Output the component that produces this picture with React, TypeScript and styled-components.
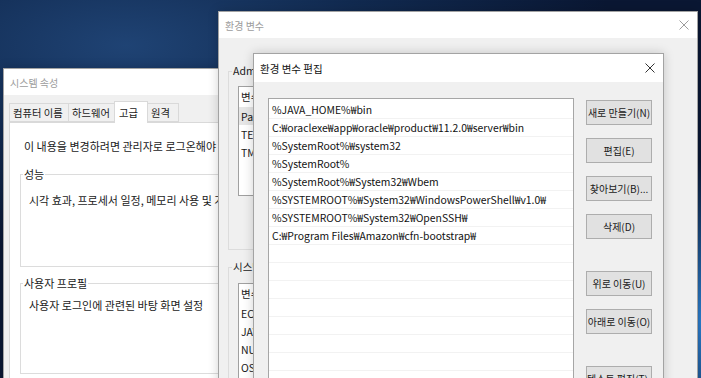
import styled, { createGlobalStyle } from "styled-components";

const GlobalStyle = createGlobalStyle`
  html, body {
    margin: 0;
    padding: 0;
    background: #0a1733;
  }
  * {
    box-sizing: border-box;
  }
`;

const Desktop = styled.div`
  position: relative;
  width: 701px;
  height: 378px;
  overflow: hidden;
  background:
    radial-gradient(ellipse 30px 160px at 100% 85%, #2b7fd0 0%, rgba(20, 70, 140, 0) 100%),
    radial-gradient(ellipse 70% 55% at 18% 12%, #1f4374 0%, #112a50 50%, #0a1733 100%);
  font-family: "Noto Sans CJK KR", "Noto Sans", sans-serif;
  font-size: 10px;
  color: #1a1a1a;
`;

const Window = styled.div<{ $left: number; $top: number; $width: number; $height: number; $z: number }>`
  position: absolute;
  left: ${(p) => p.$left}px;
  top: ${(p) => p.$top}px;
  width: ${(p) => p.$width}px;
  height: ${(p) => p.$height}px;
  z-index: ${(p) => p.$z};
  display: flex;
  flex-direction: column;
  background: #f0f0f0;
  border: 1px solid #a3a3a3;
  box-shadow: 0 0 10px rgba(0, 0, 0, 0.18);
`;

const TitleBar = styled.div<{ $height: number; $active?: boolean }>`
  flex: none;
  height: ${(p) => p.$height}px;
  display: flex;
  align-items: center;
  justify-content: space-between;
  padding: 0 8px 0 6px;
  background: #fff;
  color: ${(p) => (p.$active ? "#111" : "#9c9c9c")};
  font-size: ${(p) => (p.$active ? 10.5 : 10)}px;
`;

const CloseIcon = ({ color }: { color: string }) => (
  <svg width="10" height="10" viewBox="0 0 10 10">
    <path d="M0.5 0.5 L9.5 9.5 M9.5 0.5 L0.5 9.5" stroke={color} strokeWidth="1" fill="none" />
  </svg>
);

/* ---------- 시스템 속성 ---------- */

const SysBody = styled.div`
  flex: 1;
  display: flex;
  flex-direction: column;
  padding: 6px 5px 0 5px;
`;

const TabStrip = styled.div`
  display: flex;
  align-items: flex-end;
  height: 21px;
  position: relative;
  z-index: 1;
`;

const Tab = styled.div<{ $selected?: boolean; $width: number }>`
  width: ${(p) => p.$width}px;
  height: ${(p) => (p.$selected ? 22 : 19)}px;
  margin-bottom: ${(p) => (p.$selected ? -1 : 0)}px;
  padding: 0 0 0 ${(p) => (p.$selected ? 4 : 3)}px;
  display: flex;
  align-items: center;
  background: ${(p) => (p.$selected ? "#fff" : "#f0f0f0")};
  border: 1px solid #d9d9d9;
  border-bottom: ${(p) => (p.$selected ? "none" : "1px solid #d9d9d9")};
  margin-left: -1px;
  font-size: 10.3px;
  white-space: nowrap;
  &:first-child {
    margin-left: 0;
  }
`;

const TabPanel = styled.div`
  flex: 1;
  background: #fff;
  border: 1px solid #d9d9d9;
  padding: 16px 10px;
  display: flex;
  flex-direction: column;
  font-size: 11px;
`;

const Notice = styled.div`
  padding-left: 4px;
  line-height: 14px;
  white-space: nowrap;
`;

const Group = styled.fieldset<{ $height: number; $top: number; $padTop: number; $padLeft: number }>`
  margin: ${(p) => p.$top}px 0 0;
  padding: ${(p) => p.$padTop}px 8px 8px ${(p) => p.$padLeft}px;
  height: ${(p) => p.$height}px;
  border: 1px solid #dcdcdc;
  min-width: 0;
  display: flex;
  flex-direction: column;
`;

const GroupLabel = styled.legend`
  padding: 0 1px;
  margin-left: -6px;
  line-height: 14px;
  white-space: nowrap;
`;

const GroupText = styled.div`
  line-height: 14px;
  white-space: nowrap;
`;

const ButtonRow = styled.div`
  margin-top: auto;
  display: flex;
  justify-content: flex-end;
  gap: 8px;
`;

/* ---------- 환경 변수 ---------- */

const EnvBody = styled.div`
  flex: 1;
  display: flex;
  flex-direction: column;
  padding: 0 44px 0 9px;
  font-size: 10.5px;
`;

const ListView = styled.div<{ $height?: number }>`
  height: ${(p) => (p.$height ? `${p.$height}px` : "auto")};
  flex: ${(p) => (p.$height ? "none" : "1")};
  background: #fff;
  border: 1px solid #a0a0a0;
  overflow: hidden;
`;

const ListHeader = styled.div`
  display: flex;
  height: 20px;
  align-items: center;
  border-bottom: 1px solid #fff;
`;

const HeaderCell = styled.div<{ $width: number }>`
  width: ${(p) => p.$width}px;
  height: 100%;
  display: flex;
  align-items: center;
  padding-left: 2px;
  border-right: 1px solid #e5e5e5;
`;

const ListRow = styled.div<{ $selected?: boolean }>`
  display: flex;
  height: 18px;
  align-items: center;
  background: ${(p) => (p.$selected ? "#e6e6e6" : "transparent")};
`;

const Cell = styled.div<{ $width: number }>`
  width: ${(p) => p.$width}px;
  padding-left: 2px;
  white-space: nowrap;
  overflow: hidden;
`;

const DialogButton = styled.button<{ $width?: number }>`
  width: ${(p) => p.$width ?? 75}px;
  height: 23px;
  padding: 0;
  background: #e1e1e1;
  border: 1px solid #adadad;
  font-family: inherit;
  font-size: 10px;
  color: #1a1a1a;
  white-space: nowrap;
`;

/* ---------- 환경 변수 편집 ---------- */

const EditBody = styled.div`
  flex: 1;
  display: flex;
  gap: 12px;
  padding: 16px 11px 0 14px;
  overflow: hidden;
`;

const PathList = styled.div`
  width: 306px;
  flex: none;
  align-self: stretch;
  background: #fff;
  border: 1px solid #a6a6a6;
  padding-top: 2px;
  overflow: hidden;
`;

const PathRow = styled.div`
  height: 18px;
  display: flex;
  align-items: center;
  padding-left: 3px;
  border-bottom: 1px solid #f2f2f2;
  font-size: 10.4px;
  color: #111;
  white-space: nowrap;
`;

const ButtonColumn = styled.div`
  display: flex;
  flex-direction: column;
  gap: 13px;
  padding-top: 2px;
`;

const SideButton = styled.button`
  width: 66px;
  height: 25px;
  flex: none;
  padding: 0;
  overflow: hidden;
  background: #e1e1e1;
  border: 1px solid #adadad;
  font-family: inherit;
  font-size: 10px;
  color: #1a1a1a;
  white-space: nowrap;
  text-align: center;
`;

const Spacer = styled.div<{ $size: number }>`
  height: ${(p) => p.$size}px;
  flex: none;
`;

const paths = [
  "%JAVA_HOME%₩bin",
  "C:₩oraclexe₩app₩oracle₩product₩11.2.0₩server₩bin",
  "%SystemRoot%₩system32",
  "%SystemRoot%",
  "%SystemRoot%₩System32₩Wbem",
  "%SYSTEMROOT%₩System32₩WindowsPowerShell₩v1.0₩",
  "%SYSTEMROOT%₩System32₩OpenSSH₩",
  "C:₩Program Files₩Amazon₩cfn-bootstrap₩",
];

const userVars = [
  { name: "Path", value: "C:₩Users₩Administrator₩AppData₩Local₩Microsoft₩WindowsApps;" },
  { name: "TEMP", value: "%USERPROFILE%₩AppData₩Local₩Temp" },
  { name: "TMP", value: "%USERPROFILE%₩AppData₩Local₩Temp" },
];

const systemVars = [
  { name: "EC2LAUNCH", value: "C:₩ProgramData₩Amazon₩EC2Launch" },
  { name: "JAVA_HOME", value: "C:₩Program Files₩Java₩jdk1.8.0" },
  { name: "NUMBER_OF_PROCESSORS", value: "2" },
  { name: "OS", value: "Windows_NT" },
  { name: "Path", value: "%JAVA_HOME%₩bin;C:₩oraclexe₩app₩oracle" },
];

const tabs = [
  { label: "컴퓨터 이름", width: 60 },
  { label: "하드웨어", width: 47 },
  { label: "고급", width: 34, selected: true },
  { label: "원격", width: 32 },
];

export default function App() {
  const emptyRows = Array.from({ length: 9 });
  return (
    <>
      <GlobalStyle />
      <Desktop>
        <Window $left={3} $top={68} $width={420} $height={330} $z={1}>
          <TitleBar $height={26}>
            <span>시스템 속성</span>
            <CloseIcon color="#9c9c9c" />
          </TitleBar>
          <SysBody>
            <TabStrip>
              {tabs.map((t) => (
                <Tab key={t.label} $width={t.width} $selected={t.selected}>
                  {t.label}
                </Tab>
              ))}
            </TabStrip>
            <TabPanel>
              <Notice>이 내용을 변경하려면 관리자로 로그온해야 합니다.</Notice>
              <Group $top={14} $height={100} $padTop={12} $padLeft={8}>
                <GroupLabel>성능</GroupLabel>
                <GroupText>시각 효과, 프로세서 일정, 메모리 사용 및 가상 메모리</GroupText>
                <ButtonRow>
                  <DialogButton>설정(S)...</DialogButton>
                </ButtonRow>
              </Group>
              <Group $top={9} $height={98} $padTop={8} $padLeft={8}>
                <GroupLabel>사용자 프로필</GroupLabel>
                <GroupText>사용자 로그인에 관련된 바탕 화면 설정</GroupText>
                <ButtonRow>
                  <DialogButton>설정(E)...</DialogButton>
                </ButtonRow>
              </Group>
            </TabPanel>
          </SysBody>
        </Window>

        <Window $left={218} $top={11} $width={480} $height={420} $z={2}>
          <TitleBar $height={26}>
            <span>환경 변수</span>
            <CloseIcon color="#9c9c9c" />
          </TitleBar>
          <EnvBody>
            <Group $top={26} $height={186} $padTop={8} $padLeft={9}>
              <GroupLabel>Administrator에 대한 사용자 변수(U)</GroupLabel>
              <ListView $height={110}>
                <ListHeader>
                  <HeaderCell $width={110}>변수</HeaderCell>
                  <HeaderCell $width={300}>값</HeaderCell>
                </ListHeader>
                {userVars.map((v, i) => (
                  <ListRow key={v.name} $selected={i === 0}>
                    <Cell $width={110}>{v.name}</Cell>
                    <Cell $width={300}>{v.value}</Cell>
                  </ListRow>
                ))}
              </ListView>
              <ButtonRow>
                <DialogButton>새로 만들기(N)...</DialogButton>
                <DialogButton>편집(E)...</DialogButton>
                <DialogButton>삭제(D)</DialogButton>
              </ButtonRow>
            </Group>
            <Group $top={10} $height={200} $padTop={9} $padLeft={9}>
              <GroupLabel>시스템 변수(S)</GroupLabel>
              <ListView>
                <ListHeader>
                  <HeaderCell $width={110}>변수</HeaderCell>
                  <HeaderCell $width={300}>값</HeaderCell>
                </ListHeader>
                {systemVars.map((v) => (
                  <ListRow key={v.name}>
                    <Cell $width={110}>{v.name}</Cell>
                    <Cell $width={300}>{v.value}</Cell>
                  </ListRow>
                ))}
              </ListView>
            </Group>
          </EnvBody>
        </Window>

        <Window $left={253} $top={53} $width={411} $height={360} $z={3}>
          <TitleBar $height={28} $active>
            <span>환경 변수 편집</span>
            <CloseIcon color="#333" />
          </TitleBar>
          <EditBody>
            <PathList>
              {paths.map((p) => (
                <PathRow key={p}>{p}</PathRow>
              ))}
              {emptyRows.map((_, i) => (
                <PathRow key={`empty-${i}`} />
              ))}
            </PathList>
            <ButtonColumn>
              <SideButton>새로 만들기(N)</SideButton>
              <SideButton>편집(E)</SideButton>
              <SideButton>찾아보기(B)...</SideButton>
              <SideButton>삭제(D)</SideButton>
              <Spacer $size={6} />
              <SideButton>위로 이동(U)</SideButton>
              <SideButton>아래로 이동(O)</SideButton>
              <Spacer $size={6} />
              <SideButton>텍스트 편집(T)...</SideButton>
            </ButtonColumn>
          </EditBody>
        </Window>
      </Desktop>
    </>
  );
}
